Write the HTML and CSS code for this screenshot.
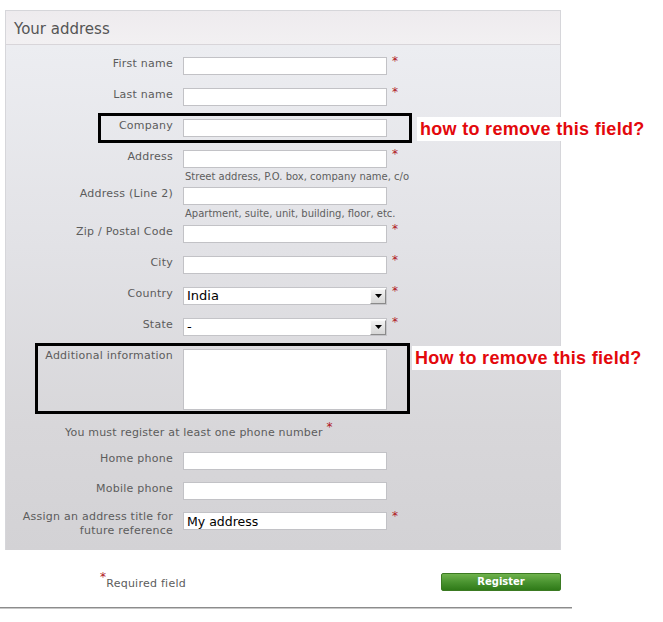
FILE: index.html
```html
<!DOCTYPE html>
<html>
<head>
<meta charset="utf-8">
<link rel="stylesheet" href="styles.css">
</head>
<body>
<div class="panel">
  <div class="panel-head">Your address</div>
  <div class="panel-body">
    <div class="row"><label class="lbl">First name</label><input class="inp" type="text"><span class="req">*</span></div>
    <div class="row"><label class="lbl">Last name</label><input class="inp" type="text"><span class="req">*</span></div>
    <div class="row annotated"><label class="lbl">Company</label><input class="inp" type="text">
      <div class="mark mark-company"></div>
      <div class="note note-company">how to remove this field?</div>
    </div>
    <div class="row row-hint"><label class="lbl">Address</label>
      <div class="fieldcol"><input class="inp" type="text"><div class="hint">Street address, P.O. box, company name, c/o</div></div>
      <span class="req">*</span></div>
    <div class="row row-hint row-hint2"><label class="lbl">Address (Line 2)</label>
      <div class="fieldcol"><input class="inp" type="text"><div class="hint">Apartment, suite, unit, building, floor, etc.</div></div>
    </div>
    <div class="row"><label class="lbl">Zip / Postal Code</label><input class="inp" type="text"><span class="req">*</span></div>
    <div class="row"><label class="lbl">City</label><input class="inp" type="text"><span class="req">*</span></div>
    <div class="row"><label class="lbl">Country</label>
      <div class="sel"><span class="sel-val">India</span><span class="sel-btn"><svg width="7" height="4" viewBox="0 0 7 4"><path d="M0 0H7L3.5 4Z" fill="#000"/></svg></span></div>
      <span class="req">*</span></div>
    <div class="row"><label class="lbl">State</label>
      <div class="sel"><span class="sel-val">-</span><span class="sel-btn"><svg width="7" height="4" viewBox="0 0 7 4"><path d="M0 0H7L3.5 4Z" fill="#000"/></svg></span></div>
      <span class="req">*</span></div>
    <div class="row row-area annotated"><label class="lbl lbl-area">Additional information</label><textarea class="area"></textarea>
      <div class="mark mark-area"></div>
      <div class="note note-area">How to remove this field?</div>
    </div>
    <p class="phone-note">You must register at least one phone number <span class="req-sup">*</span></p>
    <div class="row row-phone"><label class="lbl">Home phone</label><input class="inp" type="text"></div>
    <div class="row row-phone2"><label class="lbl">Mobile phone</label><input class="inp" type="text"></div>
    <div class="row row-last"><label class="lbl">Assign an address title for future reference</label><input class="inp" type="text" value="My address"><span class="req">*</span></div>
  </div>
</div>
<div class="footer">
  <p class="required"><span class="req-sup">*</span>Required field</p>
  <button class="btn" type="button">Register</button>
</div>
<div class="rule"></div>
</body>
</html>
```
FILE: styles.css
```css
html, body {
  margin: 0;
  padding: 0;
  background: #fff;
}
body {
  font-family: "DejaVu Sans", Verdana, sans-serif;
  color: #5a5a5a;
  width: 663px;
  height: 622px;
  overflow: hidden;
}
.panel {
  margin: 10px 0 0 5px;
  width: 554px;
  border: 1px solid #d6d6da;
  border-bottom: 0;
}
.panel-head {
  height: 33px;
  line-height: 36px;
  padding-left: 8px;
  font-size: 15px;
  color: #555;
  background: linear-gradient(#eeebee, #f2f0f2);
  border-bottom: 1px solid #d8d5d9;
}
.panel-body {
  padding: 12px 0 12px 0;
  background: linear-gradient(#ecedf1 0%, #e2e2e6 40%, #d8d7da 75%, #d3d2d5 100%);
}
.row {
  display: flex;
  align-items: flex-start;
  margin-bottom: 13px;
  position: relative;
}
.lbl {
  width: 167px;
  margin-right: 10px;
  margin-top: 0;
  text-align: right;
  font-size: 11px;
  line-height: 14px;
  letter-spacing: 0.25px;
  color: #5c5c5c;
}
.inp {
  box-sizing: border-box;
  width: 204px;
  height: 18px;
  margin: 0;
  padding: 0 3px;
  border: 1px solid #c2c2c6;
  background: #fff;
  font-family: "DejaVu Sans", Verdana, sans-serif;
  font-size: 12.5px;
  color: #000;
  outline: none;
}
.req {
  margin-left: 5px;
  margin-top: -3px;
  font-size: 12px;
  line-height: 14px;
  color: #b0151b;
}
.fieldcol {
  width: 204px;
  display: flex;
  flex-direction: column;
}
.hint {
  margin-top: 3px;
  font-size: 10px;
  line-height: 12px;
  color: #5e5e5e;
  white-space: nowrap;
  padding-left: 2px;
}
.row-hint { margin-bottom: 4px; }
.row-hint2 { margin-bottom: 5px; }
.sel {
  box-sizing: border-box;
  width: 204px;
  height: 18px;
  border: 1px solid #c4c4c8;
  background: #fff;
  display: flex;
  align-items: center;
  justify-content: space-between;
}
.sel-val {
  padding-left: 3px;
  font-size: 13px;
  color: #000;
  line-height: 16px;
}
.sel-btn {
  box-sizing: border-box;
  width: 16px;
  height: 15px;
  background: linear-gradient(#f2f2f2, #d6d6d6);
  border: 1px solid;
  border-color: #fafafa #8a8a8a #8a8a8a #fafafa;
  display: flex;
  align-items: center;
  justify-content: center;
}
.row-area { margin-bottom: 15px; }
.lbl-area { margin-top: 0; }
.area {
  box-sizing: border-box;
  width: 204px;
  height: 61px;
  margin: 0;
  border: 1px solid #c2c2c6;
  background: #fff;
  resize: none;
  outline: none;
}
.phone-note {
  margin: 0 0 12px 59px;
  font-size: 11px;
  line-height: 14px;
  letter-spacing: 0.2px;
  color: #5c5c5c;
}
.req-sup {
  color: #b0151b;
  font-size: 12px;
  position: relative;
  top: -5px;
}
.row-phone { margin-bottom: 12px; }
.row-phone2 { margin-bottom: 12px; }
.row-last { margin-bottom: 0; }
.row-last .lbl { margin-top: -2px; }

/* annotations drawn over the form */
.mark {
  position: absolute;
  border: 3px solid #000;
  box-sizing: border-box;
  pointer-events: none;
}
.mark-company {
  left: 92px;
  top: -6px;
  width: 314px;
  height: 30px;
}
.mark-area {
  left: 29px;
  top: -6px;
  width: 375px;
  height: 71px;
}
.note {
  position: absolute;
  background: #fff;
  color: #e3080c;
  font-family: "Liberation Sans", Arial, sans-serif;
  font-weight: bold;
  font-size: 18px;
  letter-spacing: 0.3px;
  white-space: nowrap;
  line-height: 24px;
  padding: 0 4px 0 3px;
}
.note-company {
  left: 411px;
  top: -2px;
}
.note-area {
  left: 406px;
  top: -3px;
}

.footer {
  display: flex;
  align-items: flex-start;
  justify-content: space-between;
  width: 561px;
  margin-top: 23px;
}
.required {
  margin: 3px 0 0 100px;
  font-size: 11px;
  line-height: 14px;
  letter-spacing: 0.25px;
  color: #5c5c5c;
}
.required .req-sup {
  top: -6px;
}
.btn {
  box-sizing: border-box;
  width: 120px;
  height: 18px;
  margin: 0;
  padding: 0;
  border: 1px solid #3b7a22;
  border-radius: 2px;
  background: linear-gradient(#6fb24c 0%, #4a9430 50%, #2f7a18 100%);
  color: #fff;
  font-family: "DejaVu Sans", Verdana, sans-serif;
  font-weight: bold;
  font-size: 10px;
  line-height: 16px;
}
.rule {
  margin-top: 16px;
  width: 572px;
  height: 1px;
  border-top: 1px solid #8c8c8c;
  background: #c8c8c8;
}
```
